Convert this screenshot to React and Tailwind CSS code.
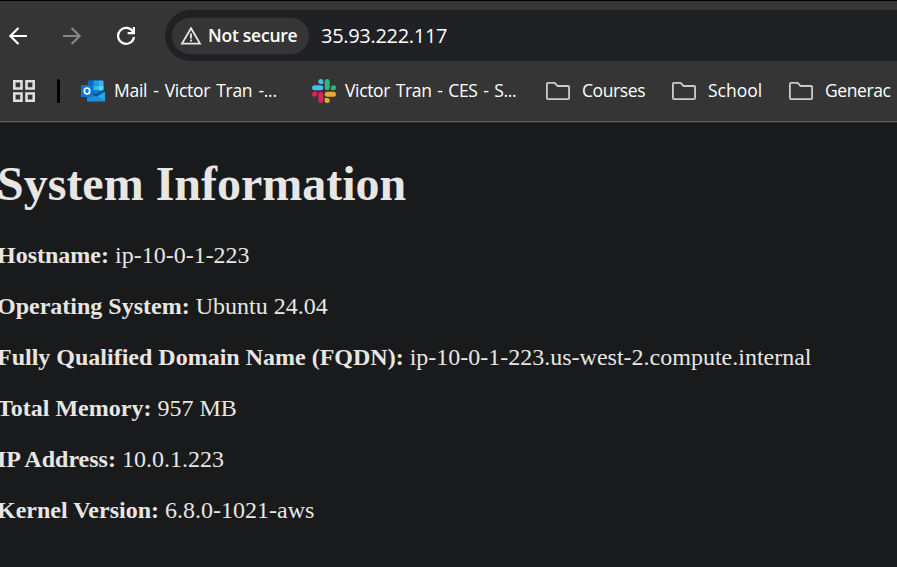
const UI = "font-['Open_Sans','Noto_Sans',sans-serif]";

function BackArrow() {
  return (
    <svg width="20" height="20" viewBox="0 0 20 20" fill="none" stroke="#fff" strokeWidth="2.2">
      <path d="M19 10H3M10.4 2L2.4 10L10.4 18" />
    </svg>
  );
}

function ForwardArrow() {
  return (
    <svg width="20" height="20" viewBox="0 0 20 20" fill="none" stroke="#868686" strokeWidth="2.2">
      <path d="M1 10H17M9.6 2L17.6 10L9.6 18" />
    </svg>
  );
}

function Reload() {
  return (
    <svg width="20" height="20" viewBox="0 0 20 20" fill="none" stroke="#fff" strokeWidth="2.2">
      <path d="M17 5.8A8 8 0 1 0 18 11" />
      <path d="M17.9 1V7.1H11.6" />
    </svg>
  );
}

function Warning() {
  return (
    <svg width="22" height="20" viewBox="0 0 22 20" fill="none" stroke="#e8e8e8" strokeWidth="1.8">
      <path d="M11 2.2L20 17.6H2Z" />
      <path d="M11 7.6V12.4M11 13.6V15.6" />
    </svg>
  );
}

function Apps() {
  return (
    <svg width="22" height="22" viewBox="0 0 22 22" fill="none" stroke="#dedede" strokeWidth="2.6">
      <path d="M1.3 1.3H8.5V8.5H1.3ZM13.5 1.3H20.7V8.5H13.5ZM1.3 13.5H8.5V20.7H1.3ZM13.5 13.5H20.7V20.7H13.5Z" />
    </svg>
  );
}

function Outlook() {
  return (
    <svg width="24" height="22" viewBox="0 0 24 22">
      <path d="M7 1.5Q7 .5 8 .5H21.5Q22.5 .5 22.5 1.5V13H7Z" fill="#0a63b5" />
      <path d="M7.5 .5H12.5V5.5H7.5Z" fill="#1067b7" />
      <path d="M12.5 .5H17.5V5.5H12.5Z" fill="#229bdf" />
      <path d="M17.5 .5H21.5Q22.5 .5 22.5 1.5V5.5H17.5Z" fill="#35b8f1" />
      <path d="M12.5 5.5H17.5V10.5H12.5Z" fill="#35b8f1" />
      <path d="M17.5 5.5H22.5V10.5H17.5Z" fill="#50d9ff" />
      <path d="M12.5 10.5H17.5V14H12.5Z" fill="#0f78d4" />
      <path d="M6 11L15 16.5L24 11.5V20.5Q24 21.5 23 21.5H7Q6 21.5 6 20.5Z" fill="#1a8fe0" />
      <path d="M16 16L24 11.5V20.8Z" fill="#28a8ea" />
      <path d="M14 14.5L22.5 10L24 11.5L15.5 16.5Z" fill="#0a4f96" />
      <rect x="0" y="5" width="12" height="12" rx=".8" fill="#0878d4" />
      <ellipse cx="6" cy="11" rx="2.7" ry="3" fill="none" stroke="#fff" strokeWidth="1.7" />
    </svg>
  );
}

function Slack() {
  return (
    <svg width="24" height="24" viewBox="0 0 24 24">
      <g fill="#45bfe3">
        <rect x="0" y="6.3" width="11.3" height="5" rx="2.5" />
        <path d="M11.3 5H8.8A2.5 2.5 0 1 1 11.3 2.5Z" />
      </g>
      <g fill="#2eb67d">
        <rect x="12.7" y="0" width="5" height="11.3" rx="2.5" />
        <path d="M19 11.3V8.8A2.5 2.5 0 1 1 21.5 11.3Z" />
      </g>
      <g fill="#e3ac2f">
        <rect x="12.7" y="12.7" width="11.3" height="5" rx="2.5" />
        <path d="M12.7 19H15.2A2.5 2.5 0 1 1 12.7 21.5Z" />
      </g>
      <g fill="#d82456">
        <rect x="6.3" y="12.7" width="5" height="11.3" rx="2.5" />
        <path d="M5 12.7V15.2A2.5 2.5 0 1 1 2.5 12.7Z" />
      </g>
    </svg>
  );
}

function Folder() {
  return (
    <svg width="24" height="18" viewBox="0 0 24 18" fill="none" stroke="#cbcbcb" strokeWidth="1.8" strokeLinejoin="round">
      <path d="M2 .9H8.6L11.6 4H22Q23.1 4 23.1 5.1V16Q23.1 17.1 22 17.1H2Q.9 17.1 .9 16V2Q.9 .9 2 .9Z" />
    </svg>
  );
}

const facts = [
  ["Hostname:", "ip-10-0-1-223"],
  ["Operating System:", "Ubuntu 24.04"],
  ["Fully Qualified Domain Name (FQDN):", "ip-10-0-1-223.us-west-2.compute.internal"],
  ["Total Memory:", "957 MB"],
  ["IP Address:", "10.0.1.223"],
  ["Kernel Version:", "6.8.0-1021-aws"],
];

export default function App() {
  return (
    <div className="flex h-[567px] w-[897px] flex-col overflow-hidden bg-[#181a1b]">
      <header className={`flex h-[123px] shrink-0 flex-col border-t border-black bg-[#353535] text-white ${UI}`}>
        <div className="flex h-[69px] shrink-0 items-center pl-2">
          <div className="flex w-[157px] shrink-0 items-center gap-[34px]">
            <BackArrow />
            <ForwardArrow />
            <Reload />
          </div>
          <div className="flex h-[51px] flex-1 items-center rounded-l-full bg-[#202124] pl-[7px]">
            <div className="flex h-9 w-[137px] shrink-0 items-center rounded-full bg-[#353535] pl-2">
              <Warning />
              <span className="ml-[6px] whitespace-nowrap text-[17.5px] font-semibold tracking-[-0.25px]">Not secure</span>
            </div>
            <span className="ml-3 whitespace-nowrap text-[20px] tracking-[-0.3px]">35.93.222.117</span>
          </div>
        </div>
        <div className="flex h-[42px] shrink-0 items-center whitespace-nowrap pl-[13px] text-[17.5px]">
          <Apps />
          <div className="ml-[22px] h-6 w-[3px] shrink-0 rounded-full bg-black" />
          <div className="ml-[21px] flex w-[231px] shrink-0 items-center gap-[9px]">
            <Outlook />
            <span className="pb-[2px] tracking-[-0.28px] [word-spacing:1.8px]">Mail - Victor Tran -...</span>
          </div>
          <div className="flex w-[234px] shrink-0 items-center gap-[9px]">
            <Slack />
            <span className="pb-[2px] tracking-[-0.35px] [word-spacing:1.5px]">Victor Tran - CES - S...</span>
          </div>
          <div className="flex w-[126px] shrink-0 items-center gap-3">
            <Folder />
            <span className="pb-[2px] tracking-[-0.4px]">Courses</span>
          </div>
          <div className="flex w-[117px] shrink-0 items-center gap-3">
            <Folder />
            <span className="pb-[2px]">School</span>
          </div>
          <div className="flex shrink-0 items-center gap-3">
            <Folder />
            <span className="pb-[2px] tracking-[-0.4px]">Generac</span>
          </div>
        </div>
        <div className="mt-auto h-px bg-[#606060]" />
        <div className="h-px bg-[#303030]" />
      </header>
      <main className="-ml-[3px] whitespace-nowrap pt-[34px] font-['Liberation_Serif','Times_New_Roman',serif] text-[#e8e6e3]">
        <h1 className="mb-[31px] text-[48px] font-bold leading-[54px]">System Information</h1>
        <div className="flex flex-col gap-6 text-[24px] leading-[27px]">
          {facts.map(([label, value]) => (
            <p key={label}>
              <strong>{label}</strong> {value}
            </p>
          ))}
        </div>
      </main>
    </div>
  );
}
